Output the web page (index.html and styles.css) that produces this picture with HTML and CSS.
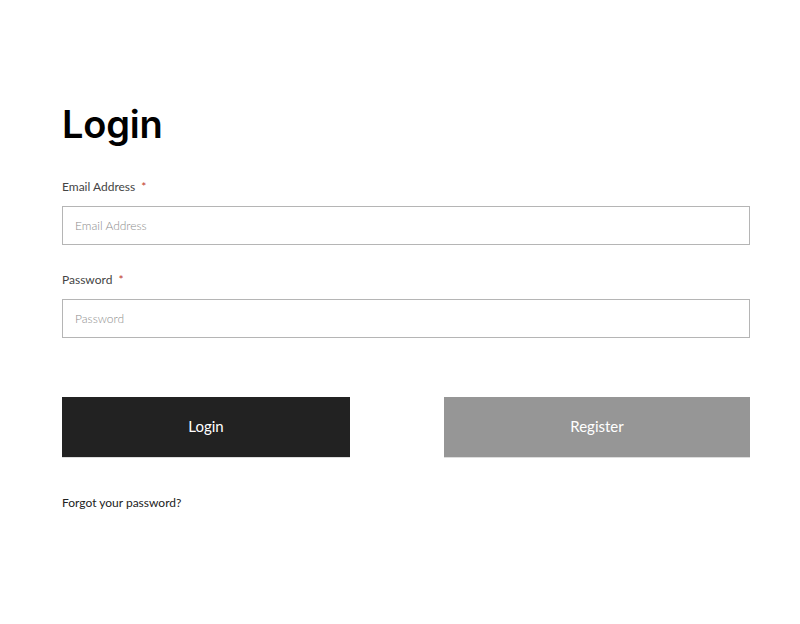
FILE: index.html
```html
<!DOCTYPE html>
<html>
<head>
<meta charset="utf-8">
<link rel="stylesheet" href="styles.css">
</head>
<body>
<main class="page">
  <h1 class="title">Login</h1>
  <form class="form">
    <div class="field">
      <label class="label">Email Address <span class="req">*</span></label>
      <input class="input" type="text" placeholder="Email Address">
    </div>
    <div class="field">
      <label class="label">Password <span class="req">*</span></label>
      <input class="input" type="password" placeholder="Password">
    </div>
    <div class="actions">
      <button type="button" class="btn btn-login">Login</button>
      <button type="button" class="btn btn-register">Register</button>
    </div>
    <a class="forgot" href="#">Forgot your password?</a>
  </form>
</main>
</body>
</html>
```
FILE: styles.css
```css
html, body {
  margin: 0;
  padding: 0;
  background: #fff;
}
body {
  font-family: Lato, "Liberation Sans", sans-serif;
  color: #222;
}
.page {
  width: 688px;
  padding: 100px 0 0 62px;
}
.title {
  font-family: Inter, "Noto Sans", sans-serif;
  font-weight: 600;
  font-size: 38px;
  line-height: 48px;
  margin: 0 0 29px;
  color: #000;
  letter-spacing: -0.2px;
}
.form {
  display: flex;
  flex-direction: column;
}
.field {
  display: flex;
  flex-direction: column;
  margin-bottom: 25px;
}
.label {
  font-size: 12px;
  line-height: 16px;
  color: #444;
  padding-top: 2px;
  margin-bottom: 11px;
}
.req {
  color: #c0392b;
  margin-left: 3px;
}
.input {
  box-sizing: border-box;
  height: 39px;
  border: 1px solid #b5b5b5;
  padding: 0 12px;
  font-family: Lato, sans-serif;
  font-weight: 300;
  font-size: 12px;
  color: #333;
  outline: none;
  background: #fff;
}
.input::placeholder {
  color: #8c8c8c;
}
.actions {
  display: flex;
  justify-content: space-between;
  margin-top: 34px;
}
.btn {
  box-sizing: border-box;
  height: 61px;
  border: none;
  border-bottom: 1px solid #ddd;
  font-family: Lato, sans-serif;
  font-size: 15px;
  color: #fff;
  cursor: pointer;
  padding: 0 0 2px;
}
.btn-login {
  width: 288px;
  background: #222;
}
.btn-register {
  width: 306px;
  background: #969696;
}
.forgot {
  margin-top: 37px;
  font-size: 12px;
  color: #222;
  text-decoration: none;
}
```
